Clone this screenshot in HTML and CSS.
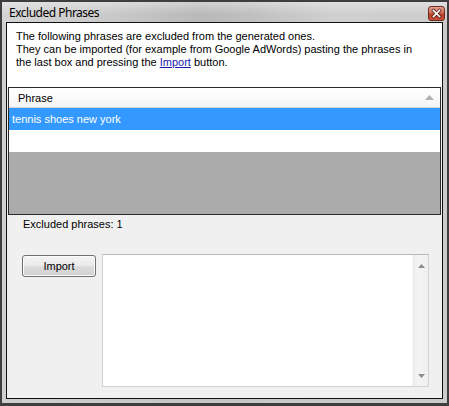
FILE: index.html
```html
<!DOCTYPE html>
<html>
<head>
<meta charset="utf-8">
<title>Excluded Phrases</title>
<link rel="stylesheet" href="styles.css">
</head>
<body>
<div class="window">
  <div class="titlebar">
    <span class="title">Excluded Phrases</span>
    <div class="close">
      <svg width="17" height="15" viewBox="0 0 17 15">
        <defs>
          <linearGradient id="cg" x1="0" y1="0" x2="0" y2="1">
            <stop offset="0" stop-color="#e2a797"/>
            <stop offset="0.45" stop-color="#d06f5c"/>
            <stop offset="0.55" stop-color="#bb3e27"/>
            <stop offset="1" stop-color="#c9543b"/>
          </linearGradient>
        </defs>
        <rect x="0.5" y="0.5" width="16" height="14" rx="2.5" fill="url(#cg)" stroke="#6e2a1e"/>
        <path d="M5.5 4.5 L11.5 10.5 M11.5 4.5 L5.5 10.5" stroke="#5a2118" stroke-width="3.2" stroke-linecap="square"/>
        <path d="M5.5 4.5 L11.5 10.5 M11.5 4.5 L5.5 10.5" stroke="#ffffff" stroke-width="1.7" stroke-linecap="square"/>
      </svg>
    </div>
  </div>
  <div class="client">
    <div class="intro">
      <p class="line">The following phrases are excluded from the generated ones.</p>
      <p class="line">They can be imported (for example from Google AdWords) pasting the phrases in</p>
      <p class="line"><span>the last box and pressing the</span> <a href="#" class="link">Import</a> <span>button.</span></p>
    </div>
    <div class="listview">
      <div class="lv-header">
        <span class="lv-col">Phrase</span>
        <svg class="sort" width="9" height="5" viewBox="0 0 9 5"><path d="M4.5 0 L9 5 L0 5 Z" fill="#b0b0b0"/></svg>
      </div>
      <div class="lv-row selected">tennis shoes new york</div>
      <div class="lv-row"></div>
      <div class="lv-empty"></div>
    </div>
    <div class="count">Excluded phrases: 1</div>
    <div class="import-row">
      <button class="btn">Import</button>
      <div class="textbox">
        <div class="tb-area"></div>
        <div class="scrollbar">
          <svg width="7" height="4" viewBox="0 0 7 4"><path d="M3.5 0 L7 4 L0 4 Z" fill="#8c8c8c"/></svg>
          <svg width="7" height="4" viewBox="0 0 7 4"><path d="M0 0 L7 0 L3.5 4 Z" fill="#8c8c8c"/></svg>
        </div>
      </div>
    </div>
  </div>
</div>
</body>
</html>
```
FILE: styles.css
```css
html, body {
  margin: 0;
  padding: 0;
  background: #ffffff;
}
body {
  font-family: "Liberation Sans", Arial, sans-serif;
  font-size: 11px;
  color: #000;
}
.window {
  box-sizing: border-box;
  width: 449px;
  height: 406px;
  border-style: solid;
  border-color: #3e3e3e;
  border-width: 2px 2px 3px 2px;
  background: linear-gradient(90deg, #cfcfcf 0%, #c6c6c6 40%, #cbcbcb 100%);
  display: flex;
  flex-direction: column;
  padding: 0 4px 4px 4px;
}
.titlebar {
  position: relative;
  height: 20px;
  margin: 0 -4px;
  padding: 0 0 0 7px;
  display: flex;
  align-items: center;
  background:
    linear-gradient(180deg, rgba(255,255,255,0.35) 0%, rgba(255,255,255,0) 60%),
    linear-gradient(90deg, #d4d4d4 0%, #c9c9c9 25%, #b9b9b9 45%, #bfbfbf 55%, #d0d0d0 75%, #cdcdcd 100%);
}
.title {
  font-family: "Noto Sans", "Open Sans", sans-serif;
  font-size: 12px;
  color: #000;
  letter-spacing: -0.5px;
}
.close {
  position: absolute;
  left: 426px;
  top: 4px;
  width: 17px;
  height: 15px;
}
.close svg {
  display: block;
}
.client {
  flex: 1;
  border: 1px solid #101010;
  background: #f0f0f0;
  display: flex;
  flex-direction: column;
}
.intro {
  background: #ffffff;
  height: 64px;
  box-sizing: border-box;
  padding: 7px 0 0 9px;
}
.line {
  margin: 0;
  line-height: 13px;
  white-space: nowrap;
}
.link {
  color: #1a1ab0;
  text-decoration: underline;
}
.listview {
  margin: 0 1px;
  height: 128px;
  box-sizing: border-box;
  border: 1px solid #2a2a2a;
  display: flex;
  flex-direction: column;
  background: #ffffff;
}
.lv-header {
  height: 20px;
  box-sizing: border-box;
  border-bottom: 1px solid #d5d5d5;
  background: linear-gradient(180deg, #ffffff 0%, #fbfbfb 50%, #f3f4f6 100%);
  display: flex;
  align-items: center;
  justify-content: space-between;
  padding: 0 6px 0 9px;
}
.lv-col {
  color: #000;
}
.sort {
  display: block;
  margin-top: -1px;
}
.lv-row {
  height: 22px;
  box-sizing: border-box;
  padding: 0 3px;
  display: flex;
  align-items: center;
  background: #ffffff;
}
.lv-row.selected {
  background: #3399ff;
  color: #ffffff;
}
.lv-empty {
  flex: 1;
  background: #ababab;
}
.count {
  margin: 3px 0 0 16px;
  line-height: 13px;
}
.import-row {
  display: flex;
  align-items: flex-start;
  margin: 23px 0 0 15px;
  gap: 6px;
}
.btn {
  width: 74px;
  height: 22px;
  margin-top: 1px;
  box-sizing: border-box;
  border: 1px solid #707070;
  border-radius: 3px;
  background: linear-gradient(180deg, #f3f3f3 0%, #ebebeb 48%, #dddddd 52%, #cfcfcf 100%);
  box-shadow: inset 0 0 0 1px #fcfcfc;
  font-family: "Liberation Sans", Arial, sans-serif;
  font-size: 11px;
  color: #000;
  padding: 0;
}
.textbox {
  width: 327px;
  height: 133px;
  box-sizing: border-box;
  border: 1px solid #d2d2d2;
  border-top-color: #b8b8b8;
  background: #ffffff;
  display: flex;
}
.tb-area {
  flex: 1;
}
.scrollbar {
  width: 16px;
  box-sizing: border-box;
  background: linear-gradient(90deg, #eaeaea 0%, #f4f4f4 30%, #f0f0f0 100%);
  border-left: 1px solid #f8f8f8;
  display: flex;
  flex-direction: column;
  justify-content: space-between;
  align-items: center;
  padding: 9px 0 8px 1px;
}
.scrollbar svg {
  display: block;
}
```
